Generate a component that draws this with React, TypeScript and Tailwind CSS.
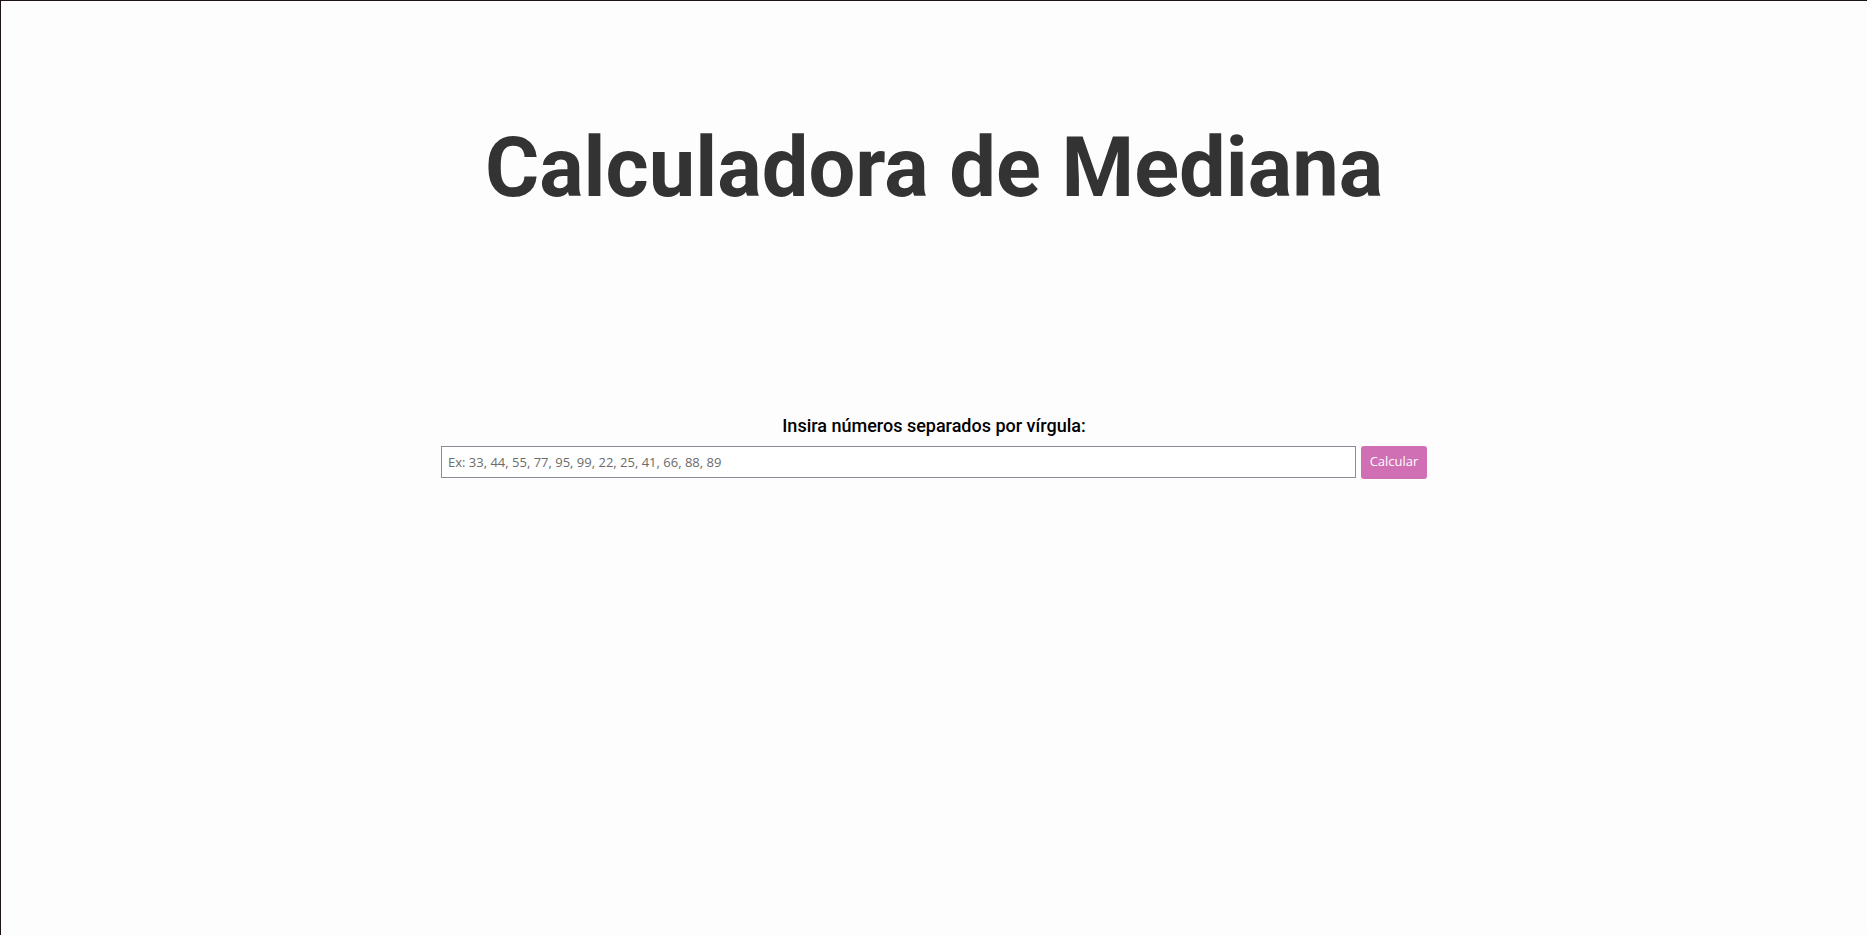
import React, { useState } from "react";

function App() {
  const [valores, setValores] = useState("");

  return (
    <div className="min-h-screen bg-[#fdfdfd] border-t border-l border-[#1c1418] flex flex-col items-center font-['Roboto',sans-serif]">
      <h1 className="mt-[117px] text-[83px] font-bold text-[#333333] leading-[1.2]">
        Calculadora de Mediana
      </h1>

      <div className="mt-[196px] flex flex-col items-center">
        <label htmlFor="numeros" className="text-[18px] leading-6 font-medium text-black mb-2">
          Insira números separados por vírgula:
        </label>
        <div className="flex items-center gap-[5px] font-['Open_Sans',sans-serif]">
          <input
            id="numeros"
            type="text"
            value={valores}
            onChange={(e) => setValores(e.target.value)}
            placeholder="Ex: 33, 44, 55, 77, 95, 99, 22, 25, 41, 66, 88, 89"
            className="w-[915px] h-[32px] border border-[#8d8a99] px-[6px] text-[13px] text-[#333] placeholder:text-[#6b6b6b] outline-none bg-white"
          />
          <button
            type="button"
            className="w-[66px] h-[33px] rounded-[3px] bg-[#d06fb4] text-white text-[13px]"
          >
            Calcular
          </button>
        </div>
      </div>
    </div>
  );
}

export default App;
